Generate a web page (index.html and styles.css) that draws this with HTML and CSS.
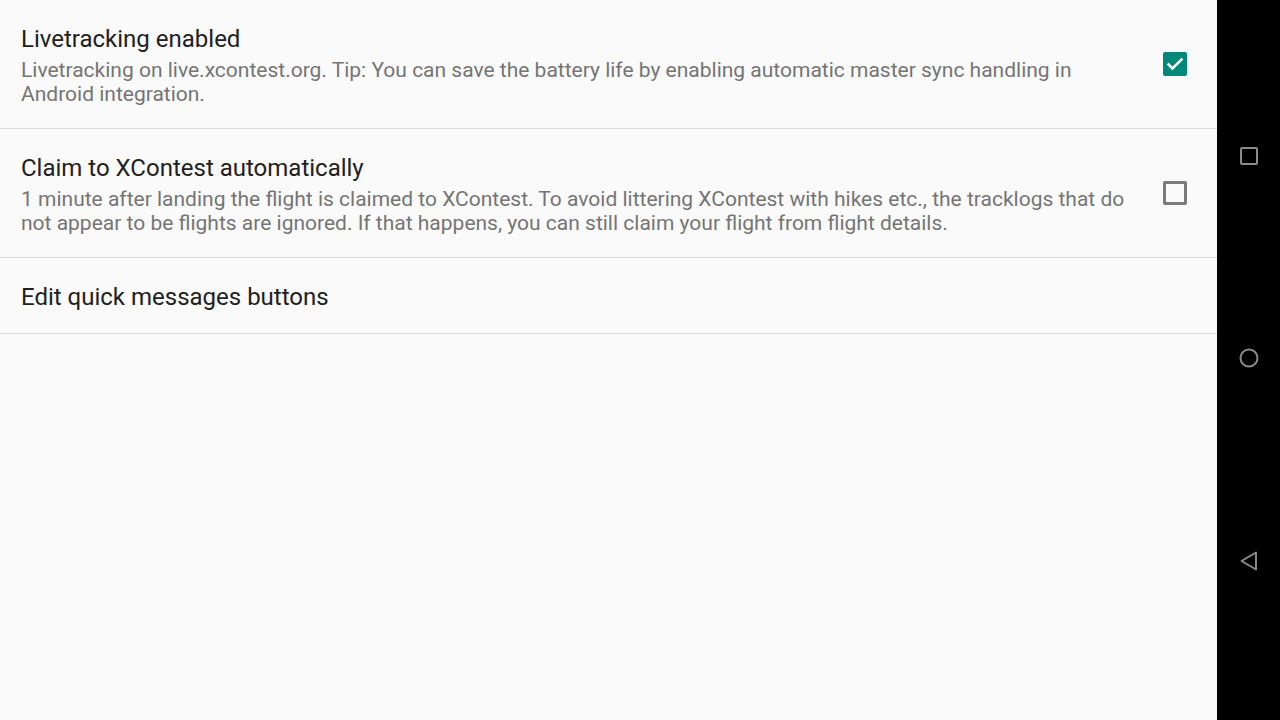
FILE: index.html
```html
<!DOCTYPE html>
<html lang="en">

<head>
    <meta charset="UTF-8">
    <meta name="viewport" content="width=device-width, initial-scale=1.0">
    <title>Livetracking</title>
    <link rel="stylesheet" href="styles.css">
</head>

<body>
    <div class="screen">
        <div class="prefs">
            <!-- livetracking -->
            <div class="pref">
                <div class="pref-text">
                    <div class="pref-title">Livetracking enabled</div>
                    <div class="pref-summary">Livetracking on live.xcontest.org. Tip: You can save the battery life by enabling automatic master sync handling in Android integration.</div>
                </div>
                <div class="pref-widget">
                    <span class="check checked">
                        <svg width="24" height="24" viewBox="0 0 24 24">
                            <path d="M5.5 12.5l4 4 9-9" fill="none" stroke="#fff" stroke-width="2.6" stroke-linecap="square"/>
                        </svg>
                    </span>
                </div>
            </div>

            <!-- claim -->
            <div class="pref">
                <div class="pref-text">
                    <div class="pref-title">Claim to XContest automatically</div>
                    <div class="pref-summary">1 minute after landing the flight is claimed to XContest. To avoid littering XContest with hikes etc., the tracklogs that do not appear to be flights are ignored. If that happens, you can still claim your flight from flight details.</div>
                </div>
                <div class="pref-widget">
                    <span class="check"></span>
                </div>
            </div>

            <div class="pref pref-single">
                <div class="pref-text">
                    <div class="pref-title">Edit quick messages buttons</div>
                </div>
            </div>
        </div>

        <div class="navbar">
            <svg width="20" height="20" viewBox="0 0 20 20">
                <rect x="2" y="2" width="16" height="16" rx="1" fill="none" stroke="#8a8a8a" stroke-width="2"/>
            </svg>
            <svg width="22" height="22" viewBox="0 0 22 22">
                <circle cx="11" cy="11" r="8.5" fill="none" stroke="#8a8a8a" stroke-width="2"/>
            </svg>
            <svg width="20" height="22" viewBox="0 0 20 22">
                <path d="M17 2.5v17L2.5 11z" fill="none" stroke="#8a8a8a" stroke-width="2" stroke-linejoin="round"/>
            </svg>
        </div>
    </div>
</body>

</html>
```

FILE: styles.css
```css
body {
    margin: 0;
    font-family: Roboto, "Noto Sans", sans-serif;
    background-color: #fafafa;
}

.screen {
    display: flex;
    width: 1280px;
    height: 720px;
}

.prefs {
    flex: 1;
    background-color: #fafafa;
}

.pref {
    display: flex;
    align-items: center;
    padding: 25px 30px 22px 21px;
    border-bottom: 1px solid #dcdcdc;
}

.pref-text {
    flex: 1;
}

.pref-title {
    font-size: 24px;
    line-height: 28px;
    color: #212121;
}

.pref-summary {
    margin-top: 5px;
    font-size: 21px;
    line-height: 24px;
    color: #757575;
}

.pref-widget {
    margin: 0 0 3px 23px;
    width: 24px;
    height: 24px;
}

.check {
    display: block;
    box-sizing: border-box;
    width: 24px;
    height: 24px;
    border: 3px solid #7a7a7a;
    border-radius: 2px;
}

.check.checked {
    border: none;
    background-color: #00897b;
}

.check svg {
    display: block;
}

.navbar {
    width: 63px;
    background-color: #000;
    display: flex;
    flex-direction: column;
    align-items: center;
    justify-content: space-between;
    padding: 146px 0 148px;
}
```
